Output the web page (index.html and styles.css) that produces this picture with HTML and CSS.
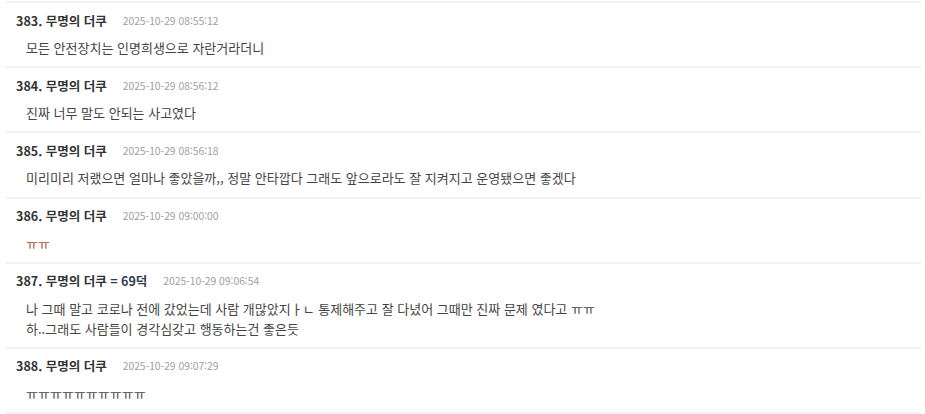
FILE: index.html
```html
<!DOCTYPE html>
<html lang="ko">
<head>
  <meta charset="UTF-8">
  <title>댓글</title>
  <link rel="stylesheet" href="styles.css">
</head>
<body>
  <div class="comments">
    <div class="comment">
      <div class="meta">
        <span class="name">383. 무명의 더쿠</span>
        <span class="date">2025-10-29 08:55:12</span>
      </div>
      <div class="text">모든 안전장치는 인명희생으로 자란거라더니</div>
    </div>
    <div class="comment">
      <div class="meta">
        <span class="name">384. 무명의 더쿠</span>
        <span class="date">2025-10-29 08:56:12</span>
      </div>
      <div class="text">진짜 너무 말도 안되는 사고였다</div>
    </div>
    <div class="comment">
      <div class="meta">
        <span class="name">385. 무명의 더쿠</span>
        <span class="date">2025-10-29 08:56:18</span>
      </div>
      <div class="text">미리미리 저랬으면 얼마나 좋았을까,, 정말 안타깝다 그래도 앞으로라도 잘 지켜지고 운영됐으면 좋겠다</div>
    </div>
    <div class="comment">
      <div class="meta">
        <span class="name">386. 무명의 더쿠</span>
        <span class="date">2025-10-29 09:00:00</span>
      </div>
      <div class="text"><span class="cry">ㅠㅠ</span></div>
    </div>
    <div class="comment">
      <div class="meta">
        <span class="name">387. 무명의 더쿠 <span class="op">= 69덕</span></span>
        <span class="date">2025-10-29 09:06:54</span>
      </div>
      <div class="text">나 그때 말고 코로나 전에 갔었는데 사람 개많았지ㅏㄴ 통제해주고 잘 다녔어 그때만 진짜 문제 였다고 ㅠㅠ<br>하..그래도 사람들이 경각심갖고 행동하는건 좋은듯</div>
    </div>
    <div class="comment">
      <div class="meta">
        <span class="name">388. 무명의 더쿠</span>
        <span class="date">2025-10-29 09:07:29</span>
      </div>
      <div class="text">ㅠㅠㅠㅠㅠㅠㅠㅠㅠㅠ</div>
    </div>
  </div>
</body>
</html>
```

FILE: styles.css
```css
* {
  box-sizing: border-box;
}
body {
  margin: 0;
  background: #fff;
  font-family: "Noto Sans CJK KR", "Noto Sans", sans-serif;
  color: #333;
}
.comments {
  margin: 1px 4px 0 6px;
  border-top: 2px solid #f2f2f2;
}
.comment {
  padding: 7px 10px 8.2px;
  border-bottom: 2px solid #f2f2f2;
}
.meta {
  display: flex;
  align-items: center;
  gap: 16px;
  height: 20px;
}
.name {
  font-size: 12.5px;
  font-weight: bold;
  color: #333;
}
.name .op {
  color: #2f3d4c;
}
.date {
  font-size: 10.3px;
  color: #a0a0a0;
}
.text {
  margin-top: 8px;
  padding-left: 10px;
  font-size: 13px;
  line-height: 20px;
  color: #444;
}
.cry {
  color: #b0493a;
}
```
